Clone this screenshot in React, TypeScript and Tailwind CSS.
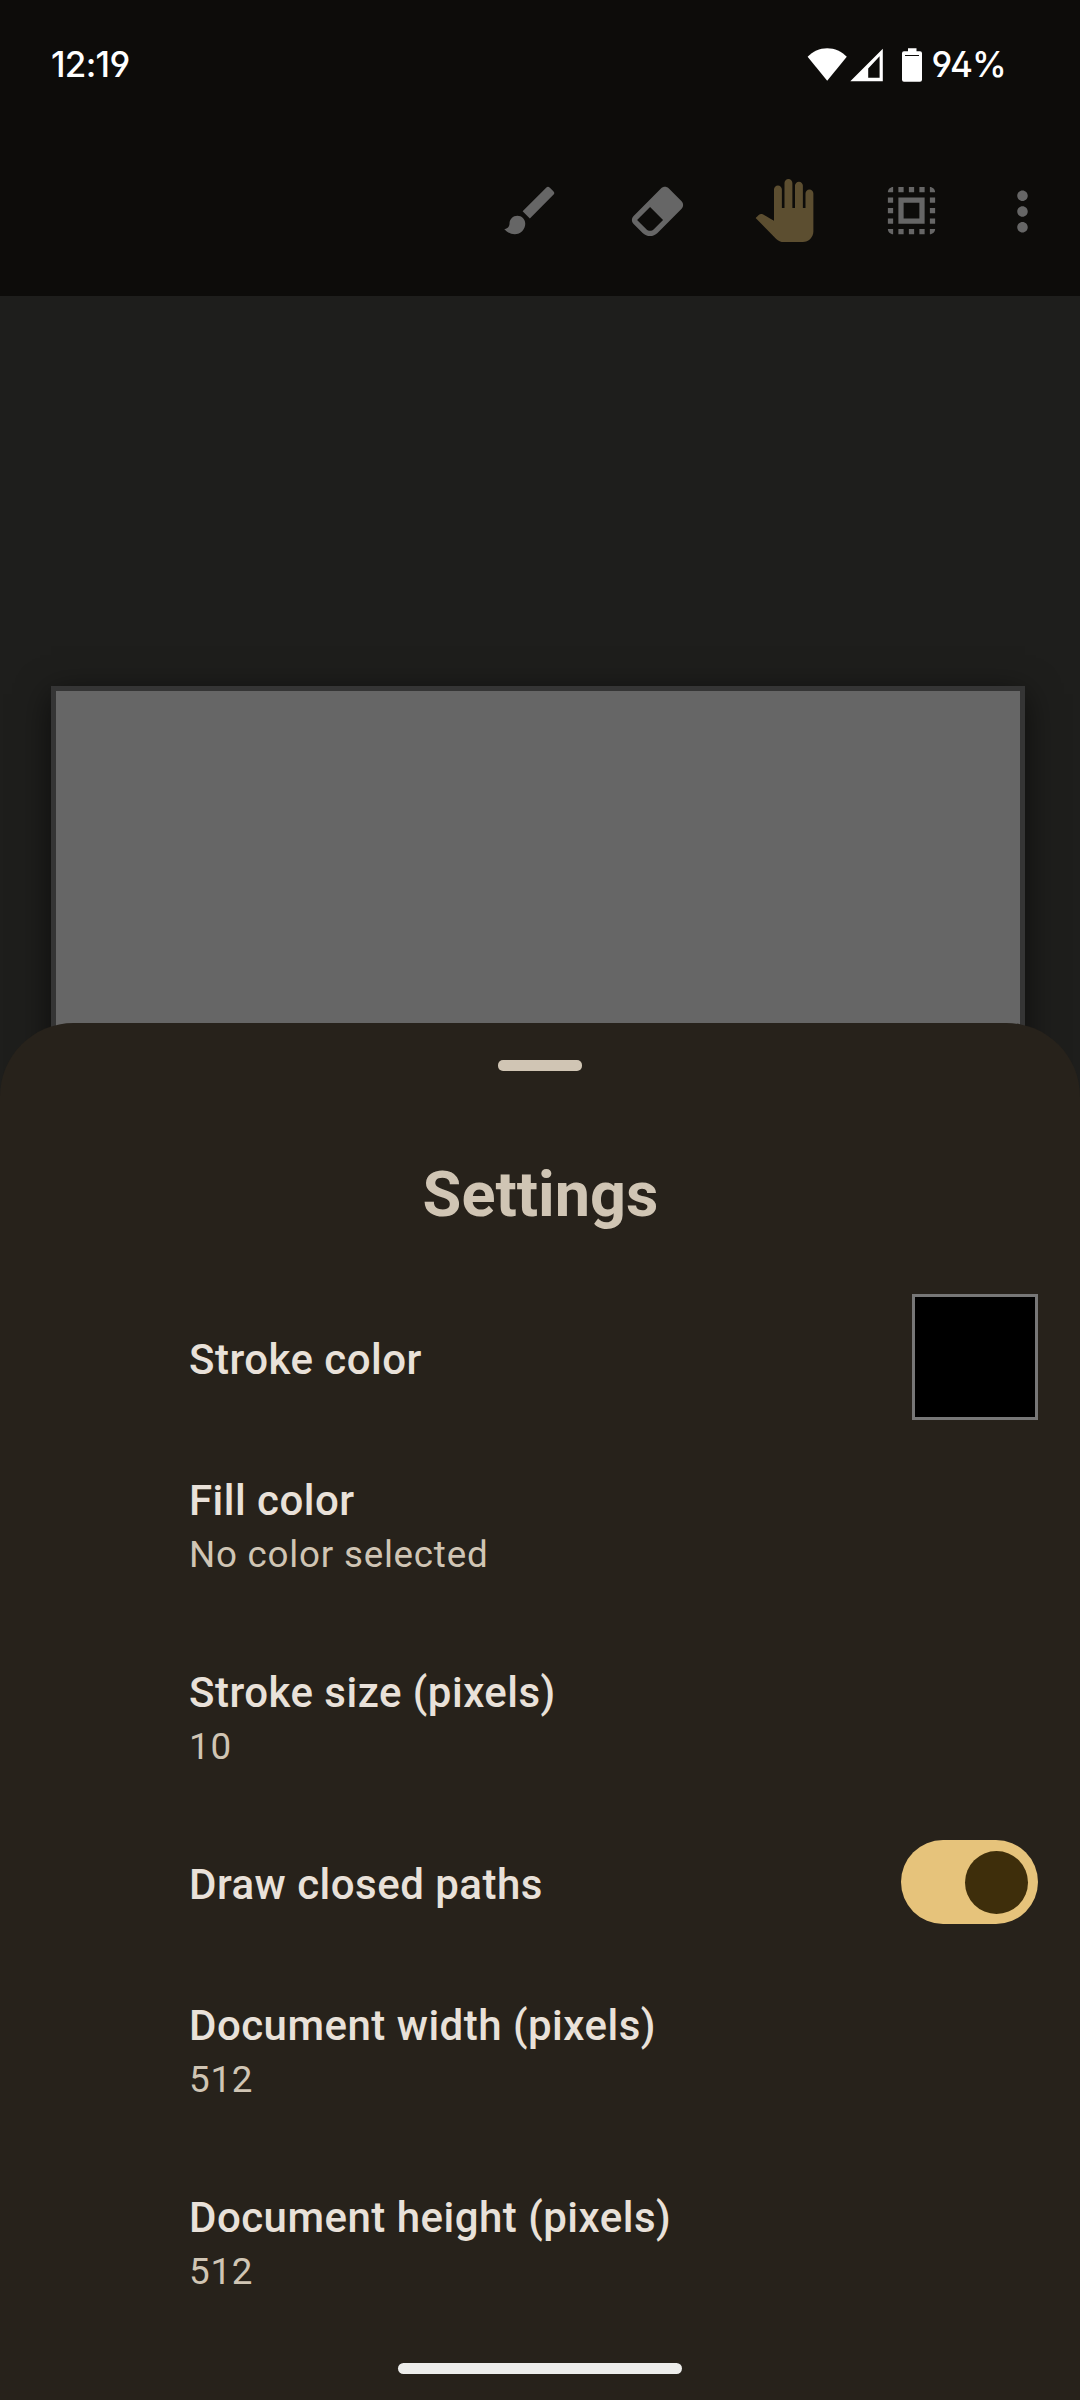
import type { ReactNode } from "react";

function ToolIcon({ d, className }: { d: string; className: string }) {
  return (
    <svg viewBox="0 0 24 24" className={`size-[63px] shrink-0 fill-current ${className}`}>
      <path d={d} />
    </svg>
  );
}

const BRUSH =
  "M7 14c-1.66 0-3 1.34-3 3 0 1.31-1.16 2-2 2 .92 1.22 2.49 2 4 2 2.21 0 4-1.79 4-4 0-1.66-1.34-3-3-3zm13.71-9.37l-1.34-1.34a.996.996 0 0 0-1.41 0L9 12.25 11.75 15l8.96-8.96a.996.996 0 0 0 0-1.41z";
const ERASER =
  "M16.24,3.56L21.19,8.5C21.97,9.29 21.97,10.55 21.19,11.34L12,20.53C10.44,22.09 7.91,22.09 6.34,20.53L2.81,17C2.03,16.21 2.03,14.95 2.81,14.16L13.41,3.56C14.2,2.78 15.46,2.78 16.24,3.56M4.22,15.58L7.76,19.11C8.54,19.9 9.8,19.9 10.59,19.11L14.12,15.58L9.17,10.63L4.22,15.58Z";
const HAND =
  "M23 5.5V20c0 2.2-1.8 4-4 4h-7.3c-1.08 0-2.1-.43-2.85-1.19L1 14.83s1.26-1.23 1.3-1.25c.22-.19.49-.29.79-.29.22 0 .42.06.6.16.04.01 4.31 2.46 4.31 2.46V4c0-.83.67-1.5 1.5-1.5S11 3.17 11 4v7h1V1.5c0-.83.67-1.5 1.5-1.5S15 .67 15 1.5V11h1V2.5c0-.83.67-1.5 1.5-1.5s1.5.67 1.5 1.5V11h1V5.5c0-.83.67-1.5 1.5-1.5s1.5.67 1.5 1.5z";
const SELECT_ALL =
  "M3 5h2V3c-1.1 0-2 .9-2 2zm0 8h2v-2H3v2zm4 8h2v-2H7v2zM3 9h2V7H3v2zm10-6h-2v2h2V3zm6 0v2h2c0-1.1-.9-2-2-2zM5 21v-2H3c0 1.1.9 2 2 2zm-2-4h2v-2H3v2zM9 3H7v2h2V3zm2 18h2v-2h-2v2zm8-8h2v-2h-2v2zm0 8c1.1 0 2-.9 2-2h-2v2zm0-12h2V7h-2v2zm0 8h2v-2h-2v2zm-4 4h2v-2h-2v2zm0-16h2V3h-2v2zM7 17h10V7H7v10zm2-8h6v6H9V9z";
const MORE =
  "M12 8c1.1 0 2-.9 2-2s-.9-2-2-2-2 .9-2 2 .9 2 2 2zm0 2c-1.1 0-2 .9-2 2s.9 2 2 2 2-.9 2-2-.9-2-2-2zm0 6c-1.1 0-2 .9-2 2s.9 2 2 2 2-.9 2-2-.9-2-2-2z";

function StatusBar() {
  return (
    <div className="flex h-32 items-center justify-between pl-[51px] pr-[74px] font-['Inter',sans-serif] text-[35px] font-[530] leading-none text-white [font-feature-settings:'ss01','cv03','cv04']">
      <span className="tracking-[-0.02em]">12:19</span>
      <div className="flex items-center">
        {/* wifi, mobile signal and battery */}
        <svg viewBox="0 0 116 36" className="mr-[9px] mt-px h-9 w-[116px] fill-white">
          <path d="M0.6 9.7C5.6 4.6 12.6 1.2 20.2 1.2S34.8 4.6 39.8 9.7L20.2 33.8Z" />
          <path
            fillRule="evenodd"
            d="M75.8 1.7V34.2H43.3ZM72.6 9.2L61.2 21.4V30.8H72.6Z"
          />
          <path
            fillRule="evenodd"
            d="M101 1.3h8.5v3h3.5a2 2 0 0 1 2 2V32.8a2 2 0 0 1-2 2H97a2 2 0 0 1-2-2V6.3a2 2 0 0 1 2-2h4zM98 7.9v1h14v-1z"
          />
        </svg>
        <span className="tracking-[-0.025em]">94%</span>
      </div>
    </div>
  );
}

function Row({ title, value, children }: { title: string; value?: string; children?: ReactNode }) {
  return (
    <div className={`flex items-start justify-between pl-[189px] pr-[42px] ${value ? "h-[192px]" : "h-[141px]"}`}>
      <div className="pt-[39px]">
        <div className="text-[42px] font-medium leading-[63px] tracking-[0.0115em] text-[#e9e1d9]">{title}</div>
        {value && (
          <div className="-mt-[3px] text-[36.75px] leading-[52px] tracking-[0.021em] text-[#d0c5b4]">{value}</div>
        )}
      </div>
      {children}
    </div>
  );
}

export default function App() {
  return (
    <div className="relative flex h-[2400px] w-[1080px] flex-col overflow-hidden bg-[#1e1e1c] font-['Roboto',sans-serif]">
      <header className="h-[296px] shrink-0 bg-[#0d0c0a]">
        <StatusBar />
        <div className="flex gap-16 pl-[499px] pt-[51px] text-[#666666]">
          <ToolIcon d={BRUSH} className="" />
          <ToolIcon d={ERASER} className="" />
          <ToolIcon d={HAND} className="text-[#5c4e30]" />
          <ToolIcon d={SELECT_ALL} className="" />
          <ToolIcon d={MORE} className="-ml-4 mt-px" />
        </div>
      </header>

      <main className="flex-1 pl-[51px] pt-[390px]">
        <div className="h-[974px] w-[974px] border-[5px] border-[#353535] bg-[#666666] shadow-[0_8px_32px_rgba(0,0,0,0.6)]" />
      </main>

      <section className="absolute inset-x-0 bottom-0 flex h-[1377px] flex-col rounded-t-[73.5px] bg-[#27221b]">
        <div className="mx-auto mt-[37px] h-[11px] w-[84px] shrink-0 rounded-[5px] bg-[#d0c5b4]" />
        <h1 className="mt-[87px] pl-px text-center text-[63px] font-bold leading-[74px] text-[#d0c5b4]">Settings</h1>
        <div className="mt-[57px]">
          <Row title="Stroke color">
            <div className="mt-[5px] size-[126px] border-[3px] border-[#777777] bg-black" />
          </Row>
          <Row title="Fill color" value="No color selected" />
          <Row title="Stroke size (pixels)" value="10" />
          <Row title="Draw closed paths">
            <div className="mt-[26px] flex h-[84px] w-[137px] items-center justify-end rounded-full bg-[#e6c37b] pr-[10.5px]">
              <div className="size-[63px] rounded-full bg-[#3e2e0b]" />
            </div>
          </Row>
          <Row title="Document width (pixels)" value="512" />
          <Row title="Document height (pixels)" value="512" />
        </div>
        <div className="mx-auto mt-6 h-[11px] w-[284px] shrink-0 rounded-full bg-[#ededeb]" />
      </section>
    </div>
  );
}
